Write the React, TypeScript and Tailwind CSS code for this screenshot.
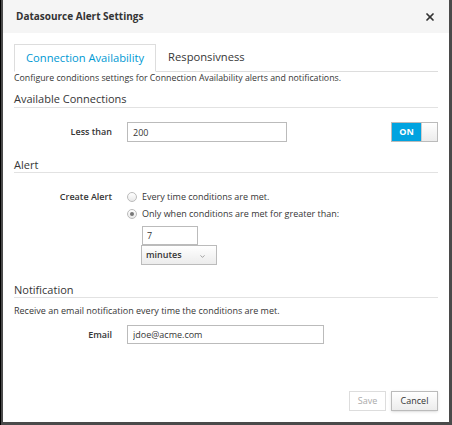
import { X, ChevronDown } from "lucide-react";

const font = { fontFamily: '"Open Sans", "Liberation Sans", sans-serif' };

const SectionHeading = ({ title, className = "" }: { title: string; className?: string }) => (
  <div className={`border-b border-[#e2e2e2] text-[11px] leading-[15px] text-[#363636] ${className}`}>{title}</div>
);

const Radio = ({ checked, label }: { checked?: boolean; label: string }) => (
  <label className="flex h-[17px] items-center gap-[5px]">
    <span className="flex h-[10px] w-[10px] items-center justify-center rounded-full border border-[#bbb] bg-gradient-to-b from-white to-[#e8e8e8]">
      {checked && <span className="h-[4px] w-[4px] rounded-full bg-[#777]" />}
    </span>
    <span>{label}</span>
  </label>
);

export default function App() {
  return (
    <div className="h-[425px] w-[452px] bg-[#4a4a4a] pb-[3px] pl-[2px] pr-[3px] border-l border-black" style={font}>
      <div className="flex h-[422px] flex-col bg-white text-[9px] text-[#363636]">
        {/* header */}
        <div className="flex h-[33px] items-center justify-between bg-[#f5f5f5] pl-[13px] pr-[13px]">
          <h1 className="text-[10px] font-bold text-[#333]">Datasource Alert Settings</h1>
          <X className="h-[12px] w-[12px] text-[#333]" strokeWidth={3.5} />
        </div>

        {/* body */}
        <div className="flex-1 px-[11px] pt-[11px]">
          <div className="flex border-b border-[#ddd] text-[11.2px]">
            <div className="-mb-px flex h-[28px] items-center border border-b-white border-[#ddd] bg-white px-[11px] text-[#0099d3]">
              Connection Availability
            </div>
            <div className="flex h-[27px] items-center px-[12px] text-[#363636]">Responsivness</div>
          </div>
          <p className="text-[8.8px] leading-[13px]">
            Configure conditions settings for Connection Availability alerts and notifications.
          </p>

          <SectionHeading title="Available Connections" className="mt-[6px] pb-[1px]" />
          <div className="mt-[14px] flex items-center">
            <div className="w-[98px] text-right font-semibold">Less than</div>
            <input
              readOnly
              value="200"
              className="ml-[15px] h-[20px] w-[160px] border border-[#bbb] px-[5px] text-[9px] outline-none"
            />
            <div className="ml-auto flex h-[20px] w-[47px] border border-[#bbb]">
              <div className="flex w-[29px] items-center justify-center bg-[#00a3e0] text-[9px] font-bold text-white">ON</div>
              <div className="flex-1 bg-gradient-to-b from-white to-[#ececec] border-l border-[#ccc]" />
            </div>
          </div>

          <SectionHeading title="Alert" className="mt-[15px]" />
          <div className="mt-[15px] flex">
            <div className="w-[98px] text-right font-semibold leading-[17px]">Create Alert</div>
            <div className="ml-[15px] flex flex-col">
              <Radio label="Every time conditions are met." />
              <Radio checked label="Only when conditions are met for greater than:" />
              <div className="ml-[15px] mt-[4px] flex flex-col">
                <input
                  readOnly
                  value="7"
                  className="h-[19px] w-[56px] border border-[#bbb] px-[4px] text-[9px] outline-none"
                />
                <div className="ml-[-1px] flex h-[20px] w-[76px] items-center justify-between border border-[#bbb] bg-gradient-to-b from-white to-[#ececec] pl-[4px] pr-[10px] font-semibold">
                  <span>minutes</span>
                  <ChevronDown className="mt-[3px] h-[7px] w-[7px] text-[#666]" strokeWidth={2} />
                </div>
              </div>
            </div>
          </div>

          <SectionHeading title="Notification" className="mt-[17px]" />
          <p className="mt-[6px] leading-[13px]">Receive an email notification every time the conditions are met.</p>
          <div className="mt-[8px] flex items-center">
            <div className="w-[98px] text-right font-semibold">Email</div>
            <input
              readOnly
              value="jdoe@acme.com"
              className="ml-[15px] h-[19px] w-[197px] border border-[#bbb] px-[5px] text-[9px] outline-none"
            />
          </div>
        </div>

        {/* footer */}
        <div className="flex justify-end gap-[5px] px-[11px] pb-[11px]">
          <button className="h-[20px] w-[37px] border border-[#ddd] bg-white text-[9px] text-[#aaa]">Save</button>
          <button className="h-[20px] w-[47px] border border-[#bbb] bg-gradient-to-b from-white to-[#ececec] text-[9px] text-[#333] shadow-sm">
            Cancel
          </button>
        </div>
      </div>
    </div>
  );
}
